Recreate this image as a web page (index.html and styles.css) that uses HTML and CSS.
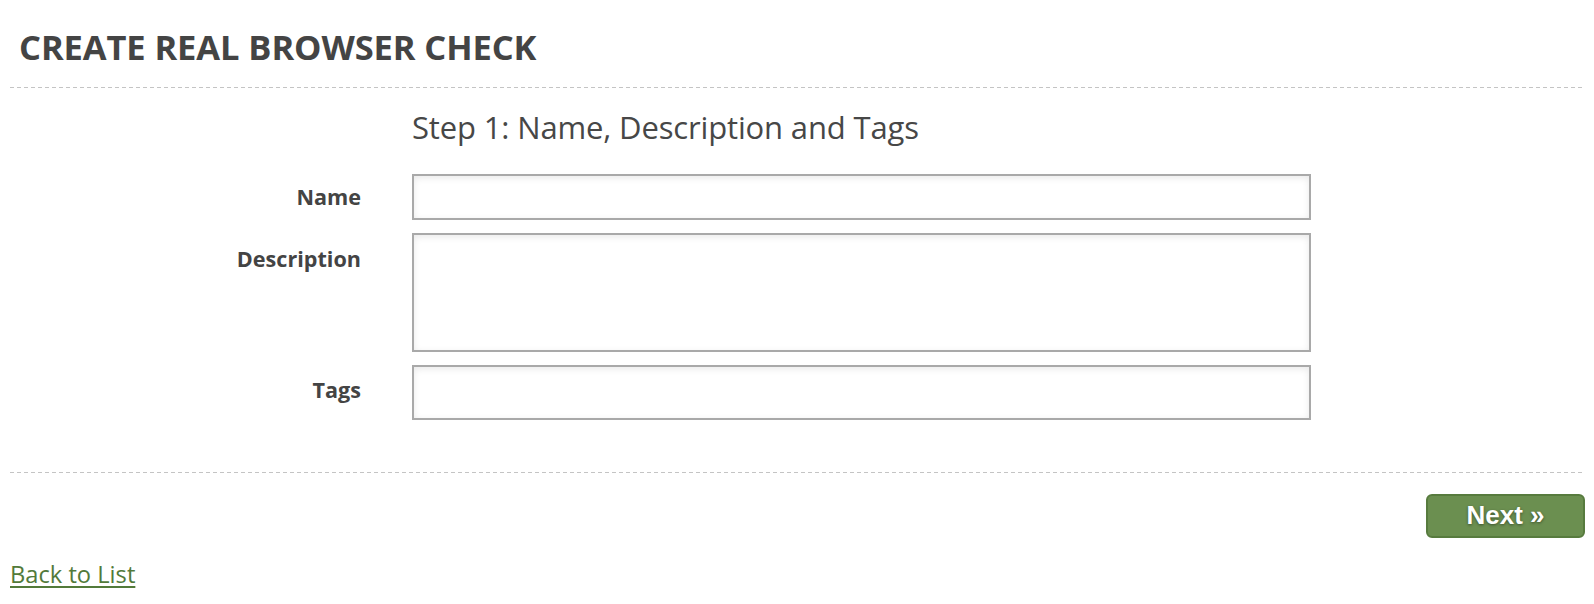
FILE: index.html
```html
<!DOCTYPE html>
<html>
<head>
<meta charset="utf-8">
<title>Create Real Browser Check</title>
<link rel="stylesheet" href="styles.css">
</head>
<body>
<div class="page">
  <h1 class="title">CREATE REAL BROWSER CHECK</h1>
  <div class="rule rule-top"></div>
  <form class="form">
    <div class="form-grid">
      <span class="spacer"></span>
      <h2 class="step">Step 1: Name, Description and Tags</h2>
      <label class="label label-name" for="name">Name</label>
      <input class="field field-name" id="name" type="text">
      <label class="label label-desc" for="desc">Description</label>
      <textarea class="field field-desc" id="desc"></textarea>
      <label class="label label-tags" for="tags">Tags</label>
      <input class="field field-tags" id="tags" type="text">
    </div>
  </form>
  <div class="rule rule-bottom"></div>
  <div class="actions">
    <button class="btn-next" type="button">Next »</button>
  </div>
  <div class="back">
    <a class="back-link" href="#">Back to List</a>
  </div>
</div>
</body>
</html>
```
FILE: styles.css
```css
* { box-sizing: border-box; }
html, body { margin: 0; padding: 0; background: #fff; }
body { font-family: "Open Sans", "Noto Sans", sans-serif; color: #444; }
.page { padding: 0 10px; }

.title {
  margin: 24px 0 0;
  padding: 0 0 17px 9px;
  font-size: 34.5px;
  line-height: 46px;
  font-weight: 700;
  color: #444;
  letter-spacing: -0.1px;
}

.rule {
  height: 1px;
  background-image: repeating-linear-gradient(to right, #c4c4c4 0 4px, transparent 4px 7px);
}

.form-grid {
  display: grid;
  grid-template-columns: 351px 899px;
  column-gap: 51px;
  row-gap: 13px;
  align-items: start;
}

.step {
  margin: 18px 0 13px;
  font-size: 31px;
  line-height: 42px;
  font-weight: 400;
  color: #474747;
  letter-spacing: -0.15px;
}

.label {
  text-align: right;
  font-size: 21.6px;
  line-height: 30px;
  font-weight: 700;
  color: #444;
}
.label-name { padding-top: 8px; }
.label-desc { padding-top: 11px; }
.label-tags { padding-top: 10px; }

.field {
  display: block;
  width: 899px;
  margin: 0;
  border: 2px solid #a9a9a9;
  border-radius: 0;
  background: #fff;
  box-shadow: inset 0 2px 7px rgba(0, 0, 0, 0.09);
  font: inherit;
  outline: none;
  resize: none;
}
.field-name { height: 46px; }
.field-desc { height: 119px; }
.field-tags { height: 55px; }

.rule-bottom { margin-top: 52px; }

.actions {
  display: flex;
  justify-content: flex-end;
  margin-top: 21px;
}

.btn-next {
  width: 159px;
  height: 44px;
  margin-right: -1px;
  padding: 0 0 2px;
  border: 2px solid #577b3e;
  border-radius: 6px;
  background: #6b8f50;
  color: #fff;
  font-family: "Liberation Sans", Arial, sans-serif;
  font-size: 26px;
  font-weight: 700;
  text-shadow: 0 1px 3px rgba(0, 0, 0, 0.45);
  cursor: pointer;
}

.back {
  margin-top: 21px;
  line-height: 31px;
}
.back-link {
  font-size: 23.7px;
  color: #527a3a;
  text-decoration: underline;
  text-decoration-thickness: 2px;
  text-underline-offset: 3px;
}
```
